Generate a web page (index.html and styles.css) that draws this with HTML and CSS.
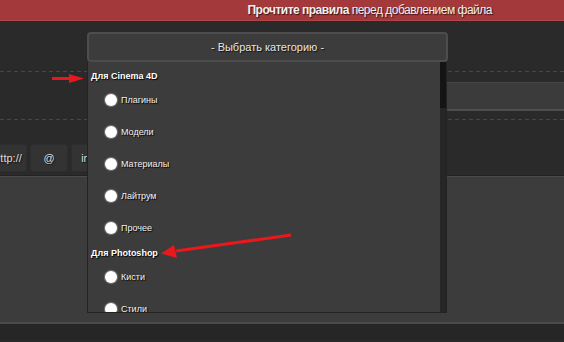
FILE: index.html
```html
<!DOCTYPE html>
<html lang="ru">
<head>
<meta charset="utf-8">
<link rel="stylesheet" href="styles.css">
</head>
<body>
<div class="page">
  <div class="notice"><b>Прочтите правила</b> перед добавлением файла</div>
  <div class="row row-select">
    <div class="select">- Выбрать категорию -</div>
  </div>
  <div class="row row-input">
    <div class="input"></div>
  </div>
  <div class="toolbar">
    <div class="tbtn">http://</div>
    <div class="tbtn">@</div>
    <div class="tbtn">img</div>
  </div>
  <div class="textarea"></div>
  <div class="footer"></div>

  <div class="dropdown">
    <div class="list">
      <div class="group">Для Cinema 4D</div>
      <div class="opt"><span class="radio"></span>Плагины</div>
      <div class="opt"><span class="radio"></span>Модели</div>
      <div class="opt"><span class="radio"></span>Материалы</div>
      <div class="opt"><span class="radio"></span>Лайтрум</div>
      <div class="opt"><span class="radio"></span>Прочее</div>
      <div class="group group2">Для Photoshop</div>
      <div class="opt"><span class="radio"></span>Кисти</div>
      <div class="opt"><span class="radio"></span>Стили</div>
    </div>
    <div class="scroll"><div class="thumb"></div></div>
  </div>

  <svg class="arrows" width="564" height="342" viewBox="0 0 564 342">
    <line x1="52" y1="78.5" x2="72" y2="78.5" stroke="#e8181c" stroke-width="3"/>
    <polygon points="69,74 84,78.5 69,83" fill="#e8181c"/>
    <line x1="291" y1="235" x2="176" y2="251" stroke="#e8181c" stroke-width="3"/>
    <polygon points="174,245 161,253.5 177,258" fill="#e8181c"/>
  </svg>
</div>
</body>
</html>
```

FILE: styles.css
```css
html, body {
  margin: 0;
  padding: 0;
  background: #2a2a2a;
  overflow: hidden;
}

.page {
  position: relative;
  width: 564px;
  height: 342px;
  font-family: "Liberation Sans", Arial, sans-serif;
  color: #eee;
}

.notice {
  height: 21px;
  background: #a3393b;
  border-bottom: 1px solid #b04648;
  box-sizing: border-box;
  text-align: right;
  padding-right: 72px;
  font-size: 12px;
  letter-spacing: -0.5px;
  line-height: 21px;
  color: #f0f0f0;
  text-shadow: 1px 1px 1px #3a1414;
}

.notice b {
  font-weight: bold;
}

.row {
  box-sizing: border-box;
  background-image: repeating-linear-gradient(to right, #474747 0 4px, transparent 4px 7px);
  background-size: 100% 1px;
  background-repeat: no-repeat;
  background-position: bottom left;
}

.row-select {
  height: 51px;
  padding: 11px 0 0 87px;
}

.select {
  width: 361px;
  height: 30px;
  box-sizing: border-box;
  border: 2px solid #4d4d4d;
  border-radius: 4px;
  background: #3c3c3c;
  text-align: center;
  font-size: 11px;
  line-height: 26px;
  color: #e6e6e6;
  text-shadow: 1px 1px 1px #111;
}

.row-input {
  height: 48px;
  padding-top: 10px;
}

.input {
  margin-left: 120px;
  height: 29px;
  box-sizing: border-box;
  background: #3b3b3b;
  border-top: 1px solid #444;
  border-bottom: 2px solid #4e4e4e;
}

.toolbar {
  display: flex;
  gap: 3px;
  margin: 24px 0 0 -11px;
  height: 28px;
}

.tbtn {
  width: 38px;
  height: 28px;
  box-sizing: border-box;
  background: #333;
  border: 1px solid #2d2d2d;
  border-radius: 3px;
  text-align: center;
  font-size: 11px;
  line-height: 26px;
  color: #ddd;
  text-shadow: 1px 1px 1px #111;
}

.textarea {
  margin-top: 4px;
  height: 148px;
  box-sizing: border-box;
  background: #3c3c3c;
  border-top: 1px solid #4b4b4b;
  border-bottom: 2px solid #4a4a4a;
  box-shadow: 0 -1px 0 #222;
}

.footer {
  height: 16px;
  background: #262626;
}

.dropdown {
  position: absolute;
  left: 87px;
  top: 62px;
  width: 360px;
  height: 251px;
  box-sizing: border-box;
  background: #3c3c3c;
  border: 1px solid #232323;
  border-top: none;
  overflow: hidden;
}

.list {
  padding-top: 6px;
  font-size: 9px;
}

.group {
  height: 16px;
  line-height: 16px;
  padding-left: 3px;
  font-weight: bold;
  color: #fff;
  text-shadow: 1px 1px 1px #000;
}

.group2 {
  margin-top: 1px;
}

.opt {
  height: 32px;
  display: flex;
  align-items: center;
  padding-left: 17px;
  color: #f2f2f2;
  text-shadow: 1px 1px 1px #000;
}

.radio {
  width: 12px;
  height: 12px;
  border-radius: 50%;
  background: #fff;
  box-shadow: 0 0 1px 1px #777;
  margin-right: 4px;
  flex: none;
}

.scroll {
  position: absolute;
  right: 0;
  top: 0;
  bottom: 0;
  width: 6px;
  background: #262626;
}

.thumb {
  height: 46px;
  background: #141414;
}

.arrows {
  position: absolute;
  left: 0;
  top: 0;
  pointer-events: none;
}
```
